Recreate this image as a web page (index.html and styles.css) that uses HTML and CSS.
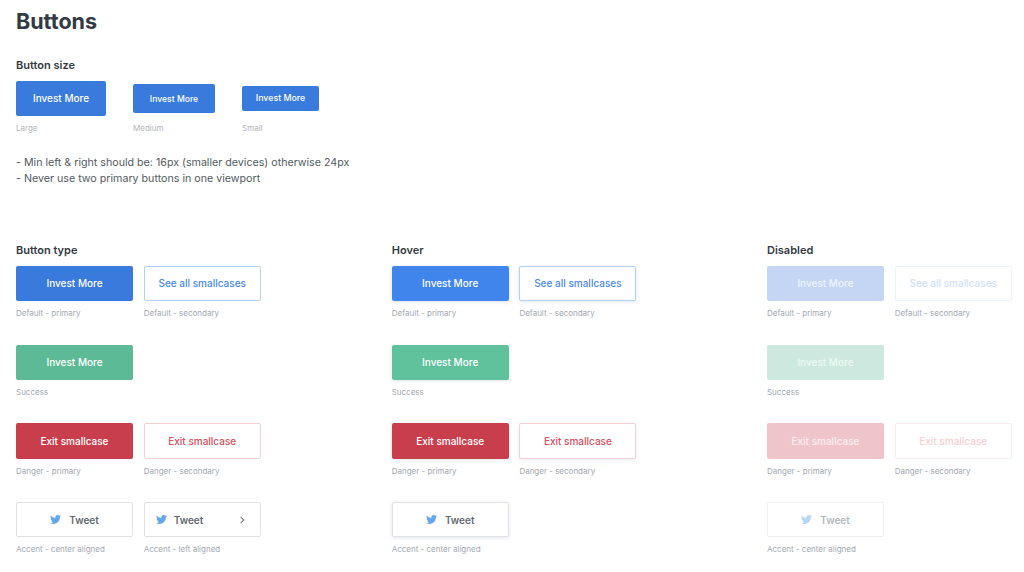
FILE: index.html
```html
<!DOCTYPE html>
<html lang="en">
<head>
<meta charset="utf-8">
<title>Buttons</title>
<link rel="stylesheet" href="styles.css">
</head>
<body>
<svg class="defs" width="0" height="0" aria-hidden="true"><symbol id="bird" viewBox="0 0 24 24"><path d="M23.953 4.57a10 10 0 01-2.825.775 4.958 4.958 0 002.163-2.723c-.951.555-2.005.959-3.127 1.184a4.92 4.92 0 00-8.384 4.482C7.69 8.095 4.067 6.13 1.64 3.162a4.822 4.822 0 00-.666 2.475c0 1.71.87 3.213 2.188 4.096a4.904 4.904 0 01-2.228-.616v.06a4.923 4.923 0 003.946 4.827 4.996 4.996 0 01-2.212.085 4.936 4.936 0 004.604 3.417 9.867 9.867 0 01-6.102 2.105c-.39 0-.779-.023-1.17-.067a13.995 13.995 0 007.557 2.209c9.053 0 13.998-7.496 13.998-13.985 0-.21 0-.42-.015-.63A9.935 9.935 0 0024 4.59z"/></symbol></svg>
<main class="page">
  <h1 class="title">Buttons</h1>
  <h2 class="heading size-heading">Button size</h2>
  <div class="sizes">
    <div class="size-item size-lg"><button class="btn primary lg">Invest More</button><p class="caption">Large</p></div>
    <div class="size-item size-md"><button class="btn primary md">Invest More</button><p class="caption">Medium</p></div>
    <div class="size-item size-sm"><button class="btn primary sm">Invest More</button><p class="caption">Small</p></div>
  </div>
  <div class="notes">
    <p>- Min left &amp; right should be: 16px (smaller devices) otherwise 24px</p>
    <p>- Never use two primary buttons in one viewport</p>
  </div>
  <div class="types">
    <section class="column">
      <h2 class="heading">Button type</h2>
      <div class="row">
        <div class="item"><button class="btn primary">Invest More</button><p class="caption">Default - primary</p></div>
        <div class="item"><button class="btn secondary">See all smallcases</button><p class="caption">Default - secondary</p></div>
      </div>
      <div class="row">
        <div class="item"><button class="btn success">Invest More</button><p class="caption">Success</p></div>
      </div>
      <div class="row">
        <div class="item"><button class="btn danger">Exit smallcase</button><p class="caption">Danger - primary</p></div>
        <div class="item"><button class="btn danger-secondary">Exit smallcase</button><p class="caption">Danger - secondary</p></div>
      </div>
      <div class="row">
        <div class="item"><button class="btn accent"><svg class="bird"><use href="#bird"/></svg>Tweet</button><p class="caption">Accent - center aligned</p></div>
        <div class="item"><button class="btn accent left"><svg class="bird"><use href="#bird"/></svg>Tweet<svg class="chevron" viewBox="0 0 8 10"><path d="M2 1l4 4-4 4"/></svg></button><p class="caption">Accent - left aligned</p></div>
      </div>
    </section>
    <section class="column hover">
      <h2 class="heading">Hover</h2>
      <div class="row">
        <div class="item"><button class="btn primary">Invest More</button><p class="caption">Default - primary</p></div>
        <div class="item"><button class="btn secondary">See all smallcases</button><p class="caption">Default - secondary</p></div>
      </div>
      <div class="row">
        <div class="item"><button class="btn success">Invest More</button><p class="caption">Success</p></div>
      </div>
      <div class="row">
        <div class="item"><button class="btn danger">Exit smallcase</button><p class="caption">Danger - primary</p></div>
        <div class="item"><button class="btn danger-secondary">Exit smallcase</button><p class="caption">Danger - secondary</p></div>
      </div>
      <div class="row">
        <div class="item"><button class="btn accent"><svg class="bird"><use href="#bird"/></svg>Tweet</button><p class="caption">Accent - center aligned</p></div>
      </div>
    </section>
    <section class="column disabled">
      <h2 class="heading">Disabled</h2>
      <div class="row">
        <div class="item"><button class="btn primary">Invest More</button><p class="caption">Default - primary</p></div>
        <div class="item"><button class="btn secondary">See all smallcases</button><p class="caption">Default - secondary</p></div>
      </div>
      <div class="row">
        <div class="item"><button class="btn success">Invest More</button><p class="caption">Success</p></div>
      </div>
      <div class="row">
        <div class="item"><button class="btn danger">Exit smallcase</button><p class="caption">Danger - primary</p></div>
        <div class="item"><button class="btn danger-secondary">Exit smallcase</button><p class="caption">Danger - secondary</p></div>
      </div>
      <div class="row">
        <div class="item"><button class="btn accent"><svg class="bird"><use href="#bird"/></svg>Tweet</button><p class="caption">Accent - center aligned</p></div>
      </div>
    </section>
  </div>
</main>
</body>
</html>
```
FILE: styles.css
```css
* { box-sizing: border-box; }
html, body { margin: 0; padding: 0; background: #fff; }
body { font-family: Inter, "Liberation Sans", sans-serif; color: #2f363f; width: 1024px; height: 572px; overflow: hidden; }
.defs { position: absolute; }
.page { padding: 8px 0 0 16px; }
.title { margin: 0; font-size: 21.5px; line-height: 26px; font-weight: 700; color: #333a42; }
.heading { margin: 0; font-size: 11px; line-height: 14px; font-weight: 600; color: #333a42; }
.size-heading { margin-top: 24px; }
.sizes { display: flex; align-items: center; margin-top: 9px; height: 35px; }
.size-item { position: relative; display: flex; }
.size-lg { margin-right: 27px; }
.size-md { margin-right: 27px; }
.size-item .caption { position: absolute; left: 0; margin: 0; color: #b0b4ba; }
.size-lg .caption { top: 42px; }
.size-md .caption { top: 39px; }
.size-sm .caption { top: 37px; }
.caption { margin: 7.2px 0 0; font-size: 8px; line-height: 11px; color: #a3a8af; white-space: nowrap; }
.notes { margin-top: 39px; font-size: 10.68px; line-height: 16px; color: #535b62; }
.notes p { margin: 0; }
.types { display: grid; grid-template-columns: 375.7px 375.3px 245px; margin-top: 56px; }
.column { display: flex; flex-direction: column; }
.row { display: flex; gap: 10.7px; height: 78.67px; }
.column .heading { margin-bottom: 9px; }
.item { width: 117px; }
.btn { display: flex; align-items: center; justify-content: center; width: 117px; height: 35.3px; padding: 0 0 .6px; border: 1px solid transparent; border-radius: 2px; font: 500 10px/12px Inter, "Liberation Sans", sans-serif; color: #fff; }
.btn.lg { width: 90px; height: 35px; font-size: 10px; padding-bottom: 1px; }
.btn.md { width: 82px; height: 29px; font-size: 8.6px; padding-bottom: 0; }
.btn.sm { width: 77px; height: 25px; font-size: 8.8px; padding-bottom: 1px; }
.primary { background: #397add; }
.secondary { background: #fff; border-color: #b5d0f7; color: #4a8be8; }
.success { background: #5cba96; }
.danger { background: #c93e4d; }
.danger-secondary { background: #fff; border-color: #f4cfd4; color: #d4505e; }
.accent { background: #fff; border-color: #dfe1e4; color: #62686f; gap: 8px; font-weight: 600; padding-bottom: 0; }
.accent.left { justify-content: flex-start; padding-left: 11px; gap: 7px; position: relative; }
.bird { width: 11px; height: 11px; fill: #64a7ea; flex: none; }
.chevron { position: absolute; right: 14.5px; top: 13px; width: 6.5px; height: 8px; fill: none; stroke: #7c8288; stroke-width: 1.4; }
.hover .primary { background: #3f85ec; box-shadow: 0 1px 4px rgba(30, 60, 110, .14); }
.hover .secondary { box-shadow: 0 1px 4px rgba(30, 60, 110, .12); }
.hover .success { background: #60c29c; box-shadow: 0 1px 4px rgba(30, 60, 110, .14); }
.hover .danger { box-shadow: 0 1px 4px rgba(30, 60, 110, .14); }
.hover .danger-secondary { box-shadow: 0 1px 4px rgba(30, 60, 110, .1); }
.hover .accent { box-shadow: 0 1px 4px rgba(30, 60, 110, .12); }
.disabled .primary { background: #c4d6f4; color: #eef3fc; }
.disabled .secondary { border-color: #ebf2fd; color: #cfe0fa; }
.disabled .success { background: #cde8de; color: #eef8f4; }
.disabled .danger { background: #efc5ca; color: #fbeef0; }
.disabled .danger-secondary { border-color: #faeaec; color: #f4cfd4; }
.disabled .accent { border-color: #eeeff1; color: #b4b8bc; }
.disabled .bird { fill: #b9d6f5; }
```
